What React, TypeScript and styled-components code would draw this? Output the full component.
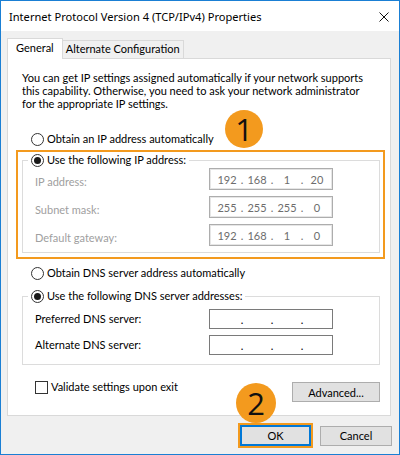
import styled, { createGlobalStyle } from "styled-components";

const GlobalStyle = createGlobalStyle`
  html, body {
    margin: 0;
    padding: 0;
    background: #ffffff;
  }
  * {
    box-sizing: border-box;
  }
`;

const Window = styled.div`
  position: relative;
  width: 400px;
  height: 455px;
  border: 1px solid #1a7fd4;
  background: #f0f0f0;
  display: flex;
  flex-direction: column;
  font-family: "Segoe UI", Lato, "Noto Sans", sans-serif;
  font-size: 11px;
  color: #000;
`;

const TitleBar = styled.div`
  height: 30px;
  background: #fff;
  display: flex;
  align-items: center;
  justify-content: space-between;
  padding: 0 10px 0 8px;
`;

const Title = styled.span`
  font-family: "Segoe UI", "Noto Sans", sans-serif;
  font-size: 11.1px;
  color: #000;
`;

const CloseIcon = styled.svg`
  width: 10px;
  height: 10px;
  margin-top: 1px;
`;

const Body = styled.div`
  flex: 1;
  display: flex;
  flex-direction: column;
  padding: 7px 8px 6px 6px;
`;

const TabStrip = styled.div`
  display: flex;
  align-items: flex-end;
  height: 20px;
`;

const Tab = styled.div<{ $active?: boolean }>`
  position: relative;
  z-index: ${(p) => (p.$active ? 1 : 0)};
  height: ${(p) => (p.$active ? "21px" : "18px")};
  margin-bottom: ${(p) => (p.$active ? "-1px" : "0")};
  padding: ${(p) => (p.$active ? "1px 8px 0 8px" : "0 3px 0 3px")};
  border: 1px solid #d9d9d9;
  border-bottom: none;
  border-left: ${(p) => (p.$active ? "1px solid #d9d9d9" : "none")};
  background: ${(p) => (p.$active ? "#fff" : "#f0f0f0")};
  line-height: 16px;
  white-space: nowrap;
`;

const Panel = styled.div`
  background: #fff;
  border: 1px solid #d9d9d9;
  padding: 12px 10px 13px 14px;
  display: flex;
  flex-direction: column;
`;

const Intro = styled.p`
  margin: 0;
  line-height: 13px;
  white-space: nowrap;
`;

const RadioRow = styled.label<{ $gap?: number }>`
  display: flex;
  align-items: center;
  gap: 3px;
  height: 16px;
  line-height: 16px;
  padding-left: 9px;
  margin-top: ${(p) => p.$gap ?? 0}px;
`;

const RadioCircle = styled.span<{ $checked?: boolean }>`
  position: relative;
  width: 13px;
  height: 13px;
  border: 1px solid #333;
  border-radius: 50%;
  background: #fff;
  flex: none;

  &::after {
    content: "";
    display: ${(p) => (p.$checked ? "block" : "none")};
    position: absolute;
    left: 2px;
    top: 2px;
    width: 7px;
    height: 7px;
    border-radius: 50%;
    background: #1a1a1a;
  }
`;

const Highlight = styled.div`
  margin: 3px -5px 0 -6px;
  border: 2px solid #f39a1e;
  padding: 0 3px 4px 4px;
`;

const GroupBox = styled.fieldset<{ $gap?: number; $padTop: number; $padBottom: number }>`
  margin: ${(p) => p.$gap ?? 0}px 0 0 0;
  min-width: 0;
  border: 1px solid #dcdcdc;
  padding: ${(p) => p.$padTop}px 0 ${(p) => p.$padBottom}px 5px;
`;

const Legend = styled.legend`
  padding: 0 3px 0 3px;
  height: 16px;
`;

const LegendRadio = styled.span`
  display: flex;
  align-items: center;
  gap: 3px;
  line-height: 16px;
`;

const FieldGrid = styled.div<{ $rowHeight: number }>`
  display: grid;
  grid-template-columns: 174px 124px;
  grid-auto-rows: ${(p) => p.$rowHeight}px;
  row-gap: 6px;
  align-items: center;
  padding-left: 7px;
`;

const FieldLabel = styled.span<{ $dim?: boolean }>`
  color: ${(p) => (p.$dim ? "#a0a0a0" : "#000")};
  line-height: 16px;
  padding-top: ${(p) => (p.$dim ? "5px" : "0")};
`;

const IpBox = styled.div<{ $dim?: boolean }>`
  height: 100%;
  display: flex;
  align-items: center;
  padding-left: 5px;
  border: 1px solid ${(p) => (p.$dim ? "#adadad" : "#7a7a7a")};
  box-shadow: ${(p) => (p.$dim ? "inset 0 0 0 1px #e6e6e6" : "none")};
  background: #fff;
  color: ${(p) => (p.$dim ? "#6d6d6d" : "#000")};
`;

const Octet = styled.span`
  width: 24px;
  text-align: center;
`;

const Dot = styled.span`
  width: 6px;
  text-align: center;
`;

const BottomRow = styled.div`
  display: flex;
  justify-content: space-between;
  align-items: flex-start;
  margin-top: 14px;
  padding-left: 13px;
`;

const CheckRow = styled.label`
  display: flex;
  align-items: center;
  gap: 3px;
  line-height: 16px;
`;

const CheckBox = styled.span`
  width: 13px;
  height: 13px;
  border: 1px solid #333;
  background: #fff;
`;

const Button = styled.button<{ $width: number; $focused?: boolean }>`
  width: ${(p) => p.$width}px;
  height: ${(p) => (p.$focused ? "21px" : "20px")};
  margin: 0;
  padding: 0;
  font: inherit;
  color: #000;
  background: #e1e1e1;
  border: ${(p) => (p.$focused ? "2px solid #0078d7" : "1px solid #adadad")};
  border-radius: 0;
`;

const AdvancedButton = styled(Button)`
  margin-top: 3px;
`;

const ButtonRow = styled.div`
  display: flex;
  justify-content: flex-end;
  align-items: center;
  gap: 7px;
  margin-top: 7px;
  margin-right: -1px;
`;

const FocusRing = styled.div`
  border: 2px solid #f39a1e;
  display: flex;
`;

const Badge = styled.div<{ $size: number; $left: number; $top: number }>`
  position: absolute;
  left: ${(p) => p.$left}px;
  top: ${(p) => p.$top}px;
  width: ${(p) => p.$size}px;
  height: ${(p) => p.$size}px;
  border-radius: 50%;
  background: #f39a1e;
  color: #111;
  font-family: "Segoe UI", "Open Sans", sans-serif;
  font-size: 31px;
  line-height: ${(p) => p.$size}px;
  text-align: center;
  z-index: 5;
`;

function IpField({ octets, dim }: { octets: string[]; dim?: boolean }) {
  return (
    <IpBox $dim={dim}>
      {octets.map((o, i) => (
        <span key={i} style={{ display: "contents" }}>
          <Octet>{o}</Octet>
          {i < 3 && <Dot>.</Dot>}
        </span>
      ))}
    </IpBox>
  );
}

export default function App() {
  return (
    <>
      <GlobalStyle />
      <Window>
        <TitleBar>
          <Title>Internet Protocol Version 4 (TCP/IPv4) Properties</Title>
          <CloseIcon viewBox="0 0 10 10">
            <path d="M0.5 0.5 L9.5 9.5 M9.5 0.5 L0.5 9.5" stroke="#111" strokeWidth="1" fill="none" />
          </CloseIcon>
        </TitleBar>

        <Body>
          <TabStrip>
            <Tab $active>General</Tab>
            <Tab>Alternate Configuration</Tab>
          </TabStrip>

          <Panel>
            <Intro>
              You can get IP settings assigned automatically if your network supports
              <br />
              this capability. Otherwise, you need to ask your network administrator
              <br />
              for the appropriate IP settings.
            </Intro>

            <RadioRow $gap={21}>
              <RadioCircle />
              Obtain an IP address automatically
            </RadioRow>

            <Highlight>
              <GroupBox $padTop={0} $padBottom={6}>
                <Legend>
                  <LegendRadio>
                    <RadioCircle $checked />
                    Use the following IP address:
                  </LegendRadio>
                </Legend>
                <FieldGrid $rowHeight={22}>
                  <FieldLabel $dim>IP address:</FieldLabel>
                  <IpField dim octets={["192", "168", "1", "20"]} />
                  <FieldLabel $dim>Subnet mask:</FieldLabel>
                  <IpField dim octets={["255", "255", "255", "0"]} />
                  <FieldLabel $dim>Default gateway:</FieldLabel>
                  <IpField dim octets={["192", "168", "1", "0"]} />
                </FieldGrid>
              </GroupBox>
            </Highlight>

            <RadioRow $gap={6}>
              <RadioCircle />
              Obtain DNS server address automatically
            </RadioRow>

            <GroupBox $gap={7} $padTop={5} $padBottom={9}>
              <Legend>
                <LegendRadio>
                  <RadioCircle $checked />
                  Use the following DNS server addresses:
                </LegendRadio>
              </Legend>
              <FieldGrid $rowHeight={20}>
                <FieldLabel>Preferred DNS server:</FieldLabel>
                <IpField octets={["", "", "", ""]} />
                <FieldLabel>Alternate DNS server:</FieldLabel>
                <IpField octets={["", "", "", ""]} />
              </FieldGrid>
            </GroupBox>

            <BottomRow>
              <CheckRow>
                <CheckBox />
                Validate settings upon exit
              </CheckRow>
              <AdvancedButton $width={88}>Advanced...</AdvancedButton>
            </BottomRow>
          </Panel>

          <ButtonRow>
            <FocusRing>
              <Button $width={71} $focused>
                OK
              </Button>
            </FocusRing>
            <Button $width={72}>Cancel</Button>
          </ButtonRow>
        </Body>

        <Badge $size={38} $left={224} $top={109}>
          1
        </Badge>
        <Badge $size={40} $left={235} $top={382}>
          2
        </Badge>
      </Window>
    </>
  );
}
